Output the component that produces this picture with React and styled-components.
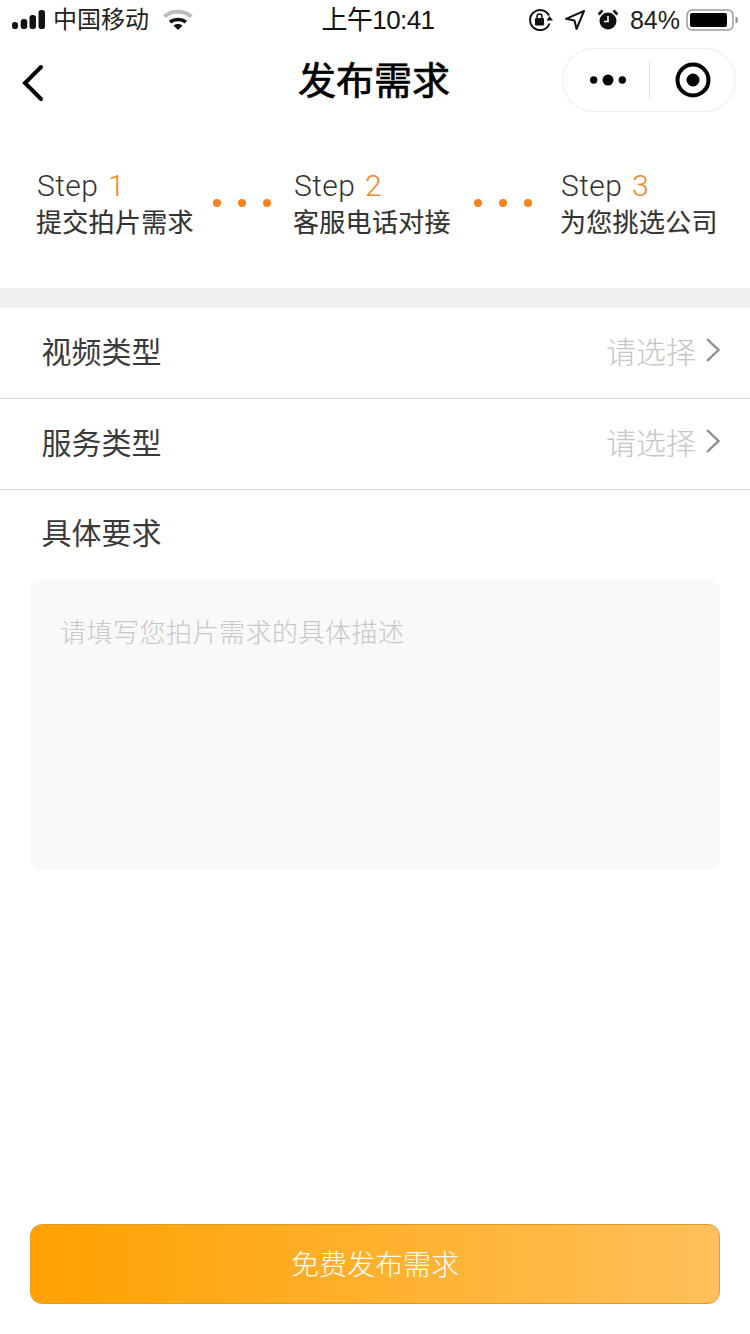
import React from 'react'
import styled, { createGlobalStyle } from 'styled-components'

const CJK = '"Liberation Sans", "Noto Sans CJK SC", sans-serif'

const GlobalStyle = createGlobalStyle`
    html, body {
        margin: 0;
        padding: 0;
        background: #fff;
    }
    body {
        font-family: ${CJK};
    }
`

const Page = styled.div`
    width: 750px;
    height: 1334px;
    display: flex;
    flex-direction: column;
    overflow: hidden;
    background: #fff;
`

const StatusBar = styled.div`
    height: 40px;
    display: grid;
    grid-template-columns: 1fr auto 1fr;
    align-items: center;
    padding: 0 12px;
    box-sizing: border-box;
    color: #1a1a1a;
`

const StatusLeft = styled.div`
    display: flex;
    align-items: center;
`

const Carrier = styled.span`
    font-size: 24px;
    line-height: 40px;
    margin: 0 14px 0 8px;
    color: #222;
`

const Clock = styled.span`
    font-size: 26px;
    line-height: 40px;
    margin-left: 6px;
    letter-spacing: -0.6px;
    color: #111;
`

const StatusRight = styled.div`
    display: flex;
    align-items: center;
    justify-content: flex-end;
    gap: 11px;
    margin-right: -2px;
`

const Percent = styled.span`
    font-size: 25px;
    line-height: 40px;
    margin-right: -5px;
    color: #222;
`

const NavBar = styled.div`
    height: 88px;
    position: relative;
    display: flex;
    align-items: center;
    justify-content: center;
`

const BackButton = styled.div`
    position: absolute;
    left: 21px;
    top: 24px;
    width: 24px;
    height: 38px;
    display: flex;
`

const Title = styled.h1`
    margin: 0 2px 12px 0;
    font-size: 38px;
    line-height: 50px;
    font-weight: 400;
    -webkit-text-stroke: 0.7px #000;
    color: #000;
    font-family: "Noto Sans CJK SC", sans-serif;
`

const Capsule = styled.div`
    position: absolute;
    left: 562px;
    top: 8px;
    width: 174px;
    height: 64px;
    box-sizing: border-box;
    border: 1px solid #ececec;
    border-radius: 32px;
    display: flex;
    align-items: center;
    background: #fff;
`

const MoreSide = styled.div`
    flex: none;
    width: 86px;
    box-sizing: border-box;
    padding-left: 4px;
    display: flex;
    align-items: center;
    justify-content: center;
`

const CloseSide = styled.div`
    flex: 1;
    display: flex;
    align-items: center;
    justify-content: center;
`

const CapsuleRule = styled.div`
    width: 1px;
    height: 38px;
    background: #dedede;
`

const Steps = styled.div`
    height: 160px;
    display: flex;
    align-items: flex-start;
    padding: 40px 0 0 37px;
    box-sizing: border-box;
`

const Step = styled.div`
    width: 156px;
    flex: none;
`

const StepHead = styled.div`
    font-family: Roboto, "Liberation Sans", sans-serif;
    font-weight: 300;
    font-size: 30px;
    line-height: 36px;
    letter-spacing: 0.4px;
    color: #333;
    white-space: pre;
`

const StepNo = styled.span`
    color: #f5841f;
    margin-left: 2px;
`

const StepText = styled.div`
    font-size: 26px;
    line-height: 34px;
    letter-spacing: 0.3px;
    color: #333;
    white-space: nowrap;
    margin-left: -1px;
    -webkit-text-stroke: 0.15px #333;
    font-family: "Noto Sans CJK SC", sans-serif;
`

const Dots = styled.div`
    flex: none;
    display: flex;
    gap: 17px;
    margin: 31px ${p => p.$right}px 0 ${p => p.$left}px;
`

const Dot = styled.i`
    display: block;
    width: 8px;
    height: 8px;
    border-radius: 50%;
    background: #f5841f;
`

const Gap = styled.div`
    height: 20px;
    background: #f0f0f0;
`

const Row = styled.div`
    height: 91px;
    box-sizing: border-box;
    display: flex;
    align-items: center;
    justify-content: space-between;
    padding: 0 29px 6px 42px;
    border-bottom: 1px solid #d4d4d4;
`

const Label = styled.div`
    font-size: 30px;
    line-height: 40px;
    margin-left: -0.500px;
    color: #3a3a3a;
    font-family: "Noto Sans CJK SC", sans-serif;
`

const Pick = styled.div`
    display: flex;
    align-items: center;
    gap: 9px;
    font-size: 30px;
    color: #c6c6c6;
    font-family: "Noto Sans CJK SC", sans-serif;
    font-weight: 300;
`

const Block = styled.div`
    padding: 21px 30px 0;
`

const BlockLabel = styled(Label)`
    padding-left: 12px;
    margin-bottom: 29px;
`

const TextBox = styled.div`
    height: 290px;
    box-sizing: border-box;
    padding: 33px 30px;
    background: #f9f9f9;
    border-radius: 12px;
    font-size: 26px;
    line-height: 36px;
    letter-spacing: 0.5px;
    color: #c8c8c8;
    font-family: "Noto Sans CJK SC", sans-serif;
    font-weight: 300;
`

const SubmitButton = styled.div`
    margin: auto 30px 30px;
    height: 80px;
    box-sizing: border-box;
    padding-bottom: 2px;
    border: 1px solid #df9a2c;
    border-radius: 12px;
    background: linear-gradient(90deg, #ffa100 0%, #ffc05a 100%);
    color: #fff;
    font-size: 28px;
    display: flex;
    align-items: center;
    justify-content: center;
    font-family: "Noto Sans CJK SC", sans-serif;
    font-weight: 300;
`

const Signal = () => (
    <svg width="33" height="20" viewBox="0 0 33 20">
        <rect x="0" y="12" width="6" height="7" rx="2.800" fill="#111" />
        <rect x="8.700" y="9" width="6.500" height="10" rx="2.800" fill="#111" />
        <rect x="17.500" y="5" width="6.500" height="14" rx="2.800" fill="#111" />
        <rect x="26.500" y="0" width="6.500" height="19" rx="2.800" fill="#111" />
    </svg>
)

const Wifi = () => (
    <svg width="30" height="22" viewBox="0 0 30 22">
        <path d="M1.500 7.500C9 1 21 1 28.500 7.500" fill="none" stroke="#bdbdbd" strokeWidth="4" />
        <path d="M7 13C11.500 9.500 18.500 9.500 23 13" fill="none" stroke="#111" strokeWidth="3.500" />
        <path d="M10.500 16.500C13 14.500 17 14.500 19.500 16.500L15 21Z" fill="#111" />
    </svg>
)

const RotationLock = () => (
    <svg width="26" height="26" viewBox="0 0 26 26">
        <path d="M22.500 16.500A10 10 0 1 1 22 8.500" fill="none" stroke="#111" strokeWidth="2" />
        <path d="M19 9.500L25.500 9.500L22.500 14Z" fill="#111" transform="rotate(180 22.500 11.500)" />
        <rect x="8" y="11" width="9" height="7.500" rx="1" fill="#111" />
        <path d="M10 11.500V9.500a2.500 2.500 0 0 1 5 0V11.500" fill="none" stroke="#111" strokeWidth="1.500" />
    </svg>
)

const Location = () => (
    <svg width="22" height="22" viewBox="0 0 22 22">
        <path d="M20 2L2 9.800L10.500 11.500L12.500 20Z" fill="none" stroke="#111" strokeWidth="2" strokeLinejoin="round" />
    </svg>
)

const Alarm = () => (
    <svg width="22" height="24" viewBox="0 0 22 24">
        <circle cx="11" cy="13" r="8.500" fill="#111" />
        <path d="M11 8V13.500H7" fill="none" stroke="#fff" strokeWidth="1.600" />
        <path d="M1.500 6.500L5.500 2.500M20.500 6.500L16.500 2.500" stroke="#111" strokeWidth="2.500" />
    </svg>
)

const Battery = () => (
    <svg width="54" height="24" viewBox="0 0 54 24">
        <rect x="1" y="2" width="46" height="20" rx="5" fill="none" stroke="#999" strokeWidth="1.500" />
        <rect x="4" y="5" width="37" height="14" rx="2" fill="#000" />
        <path d="M49.500 8.500C51.500 9 52 10.500 52 12C52 13.500 51.500 15 49.500 15.500Z" fill="#999" />
    </svg>
)

const BackIcon = () => (
    <svg width="24" height="38" viewBox="0 0 24 38">
        <path d="M20 3L4 19L20 35" fill="none" stroke="#000" strokeWidth="4" strokeLinecap="round" />
    </svg>
)

const MoreIcon = () => (
    <svg width="36" height="14" viewBox="0 0 36 14">
        <circle cx="3.700" cy="7" r="3.700" fill="#000" />
        <circle cx="18" cy="7" r="5.500" fill="#000" />
        <circle cx="32.300" cy="7" r="3.700" fill="#000" />
    </svg>
)

const CloseIcon = () => (
    <svg width="36" height="36" viewBox="0 0 36 36">
        <circle cx="18" cy="18" r="15.500" fill="none" stroke="#000" strokeWidth="4" />
        <circle cx="18" cy="18" r="6.500" fill="#000" />
    </svg>
)

const Chevron = () => (
    <svg width="16" height="26" viewBox="0 0 16 26">
        <path d="M2 2L13.500 13L2 24" fill="none" stroke="#8e8e8e" strokeWidth="2.400" />
    </svg>
)

const DotGroup = ({ left, right }) => (
    <Dots $left={left} $right={right}>
        <Dot />
        <Dot />
        <Dot />
    </Dots>
)

const App = () => (
    <Page>
        <GlobalStyle />
        <StatusBar>
            <StatusLeft>
                <Signal />
                <Carrier>中国移动</Carrier>
                <Wifi />
            </StatusLeft>
            <Clock>上午10:41</Clock>
            <StatusRight>
                <RotationLock />
                <Location />
                <Alarm />
                <Percent>84%</Percent>
                <Battery />
            </StatusRight>
        </StatusBar>
        <NavBar>
            <BackButton>
                <BackIcon />
            </BackButton>
            <Title>发布需求</Title>
            <Capsule>
                <MoreSide>
                    <MoreIcon />
                </MoreSide>
                <CapsuleRule />
                <CloseSide>
                    <CloseIcon />
                </CloseSide>
            </Capsule>
        </NavBar>
        <Steps>
            <Step>
                <StepHead>Step <StepNo>1</StepNo></StepHead>
                <StepText>提交拍片需求</StepText>
            </Step>
            <DotGroup left={20} right={23} />
            <Step>
                <StepHead>Step <StepNo>2</StepNo></StepHead>
                <StepText>客服电话对接</StepText>
            </Step>
            <DotGroup left={24} right={29} />
            <Step>
                <StepHead>Step <StepNo>3</StepNo></StepHead>
                <StepText>为您挑选公司</StepText>
            </Step>
        </Steps>
        <Gap />
        <Row>
            <Label>视频类型</Label>
            <Pick>请选择<Chevron /></Pick>
        </Row>
        <Row>
            <Label>服务类型</Label>
            <Pick>请选择<Chevron /></Pick>
        </Row>
        <Block>
            <BlockLabel>具体要求</BlockLabel>
            <TextBox>请填写您拍片需求的具体描述</TextBox>
        </Block>
        <SubmitButton>免费发布需求</SubmitButton>
    </Page>
)

export default App
